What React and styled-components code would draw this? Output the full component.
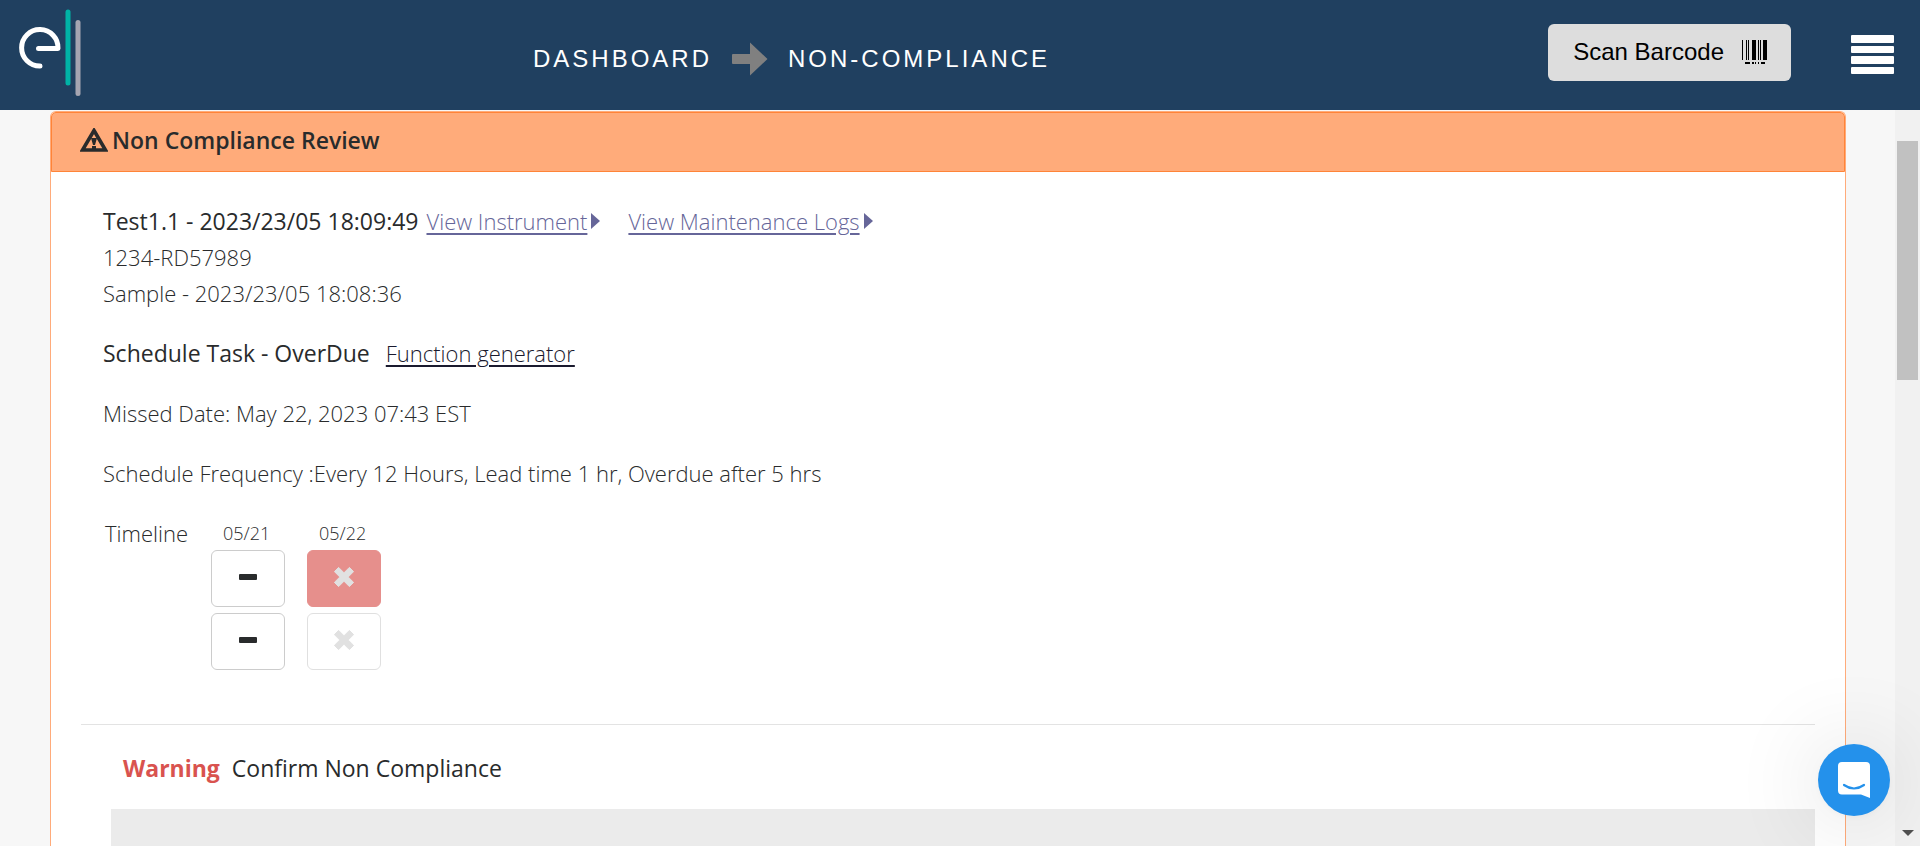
import React from "react";
import styled, { createGlobalStyle, css } from "styled-components";

const GlobalStyle = createGlobalStyle`
  *, *::before, *::after { box-sizing: border-box; }
  body {
    margin: 0;
    background: #f7f7f7;
    color: #292b2c;
    font-family: "Segoe UI", "Open Sans", "Noto Sans", sans-serif;
    font-size: 22px;
    font-weight: 300;
    line-height: 36px;
  }
  button { font: inherit; color: inherit; cursor: pointer; }
  p, h1, h2 { margin: 0; padding: 0; font: inherit; }
`;

const Shell = styled.div`
  display: flex;
  flex-direction: column;
  height: 100vh;
  overflow: hidden;
`;

const TopBar = styled.header`
  display: grid;
  grid-template-columns: 533px 1fr auto;
  align-items: center;
  flex: none;
  height: 110px;
  padding-right: 26px;
  background: #204060;
  color: #fff;
  font-family: "Liberation Sans", Arial, sans-serif;
  font-size: 24px;
`;

const Logo = styled.a`
  display: block;
  height: 110px;
  svg { display: block; }
`;

const Trail = styled.nav`
  display: flex;
  align-items: center;
  gap: 20px;
  padding-top: 8px;
  letter-spacing: 3px;
  text-transform: uppercase;
`;

const TrailLink = styled.a`
  color: #fff;
  text-decoration: none;
`;

const Actions = styled.div`
  display: flex;
  align-items: center;
  gap: 60px;
`;

const ScanButton = styled.button`
  display: flex;
  align-items: center;
  gap: 18px;
  height: 57px;
  margin-bottom: 6px;
  padding: 0 24px 0 25px;
  border: 0;
  border-radius: 6px;
  background: #ddd;
  color: #000;
`;

const MenuButton = styled.button`
  padding: 0;
  border: 0;
  background: none;
  svg { display: block; }
`;

const Viewport = styled.div`
  display: flex;
  flex: 1;
  min-height: 0;
`;

const Main = styled.main`
  display: flex;
  flex: 1;
  min-width: 0;
  padding: 1px 49px 0 50px;
`;

const Card = styled.section`
  display: flex;
  flex-direction: column;
  flex: 1;
  border: 1px solid #ffab7a;
  border-bottom: 0;
  border-radius: 6px 6px 0 0;
  background: #fff;
`;

const CardHeader = styled.h1`
  display: flex;
  align-items: center;
  gap: 4px;
  height: 60px;
  padding: 0 28px 4px;
  border: 1px solid #ff8438;
  border-radius: 5px 5px 0 0;
  background: #ffab7a;
  font-size: 23px;
  font-weight: 600;
`;

const Details = styled.div`
  display: flex;
  flex-direction: column;
  gap: 24px;
  margin: 0 30px;
  padding: 31px 22px 54px;
  border-bottom: 1px solid #e3e3e3;
`;

const Strong = styled.span`
  font-size: 23px;
  font-weight: 400;
`;

const Line = styled.p`
  display: flex;
  align-items: center;
  gap: ${(p) => p.$gap || 0}px;
`;

const TextLink = styled.a`
  color: ${(p) => (p.$dark ? "#1a1a2e" : "#666699")};
  text-decoration: underline;
  text-decoration-thickness: 2px;
  text-underline-offset: 3px;
`;

const ArrowLink = styled.span`
  display: flex;
  align-items: center;
  gap: 4px;
  &::after {
    content: "";
    border-left: 9px solid #666699;
    border-top: 8px solid transparent;
    border-bottom: 8px solid transparent;
  }
`;

const Timeline = styled.div`
  display: flex;
  gap: 22px;
  padding-left: 2px;
`;

const TimelineLabel = styled.span`
  width: 84px;
`;

const Day = styled.div`
  display: flex;
  flex-direction: column;
  gap: 6px;
  width: 74px;
`;

const DayName = styled.span`
  height: 29px;
  padding-left: 12px;
  font-size: 18px;
`;

const Slot = styled.button`
  display: flex;
  align-items: center;
  justify-content: center;
  height: 57px;
  padding: 0 0 4px;
  border: 1px solid #ccc;
  border-radius: 6px;
  background: #fff;
  ${(p) => p.$faded && css`border-color: #e0e0e0;`}
  ${(p) => p.$missed && css`
    border-color: #e68f8c;
    background: #e68f8c;
  `}
`;

const Confirm = styled.section`
  display: flex;
  flex-direction: column;
  flex: 1;
  gap: 23px;
  margin: 0 30px;
  padding: 25px 0 0 30px;
`;

const Notice = styled.h2`
  display: flex;
  gap: 12px;
  padding-left: 12px;
  font-size: 23px;
  font-weight: 400;
`;

const Danger = styled.strong`
  color: #d9534f;
  font-weight: 700;
`;

const Panel = styled.div`
  flex: 1;
  background: #ebebeb;
`;

const ScrollTrack = styled.div`
  display: flex;
  flex-direction: column;
  align-items: center;
  justify-content: space-between;
  width: 25px;
  padding: 31px 0 10px;
  background: #f1f1f1;
  &::before {
    content: "";
    width: 21px;
    height: 239px;
    background: #c1c1c1;
  }
  &::after {
    content: "";
    border-top: 6px solid #505050;
    border-left: 6px solid transparent;
    border-right: 6px solid transparent;
  }
`;

const ChatButton = styled.button`
  position: fixed;
  right: 30px;
  bottom: 30px;
  width: 72px;
  height: 72px;
  padding: 0;
  border: 0;
  border-radius: 50%;
  background: #2491eb;
  box-shadow: 0 2px 9px rgba(0, 0, 0, 0.04), 0 3px 90px rgba(0, 0, 0, 0.16);
  svg { display: block; }
`;

const DashIcon = () => (
  <svg width="20" height="20" viewBox="0 0 20 20" aria-hidden="true">
    <rect x="1" y="7" width="18" height="6" rx="1" fill="#292b2c" />
  </svg>
);

const CrossIcon = () => (
  <svg width="20" height="20" viewBox="0 0 20 20" aria-hidden="true">
    <path
      d="M4.6 0.4 10 5.8 15.4 0.4 19.6 4.6 14.2 10 19.6 15.4 15.4 19.6 10 14.2 4.6 19.6 0.4 15.4 5.8 10 0.4 4.6Z"
      fill="#e1e1e1"
      stroke="#e1e1e1"
      strokeLinejoin="round"
    />
  </svg>
);

const BARS = [[0, 1], [4, 1], [6, 1], [10, 4], [16, 1], [18, 1], [21, 4]];

const BarcodeIcon = () => (
  <svg width="25" height="24" viewBox="0 0 25 24" aria-hidden="true">
    {BARS.map(([x, w]) => (
      <rect key={x} x={x} y="0" width={w} height="20" />
    ))}
    <path d="M3 22h5v2H3zM10 22h2v2h-2zM13 22h1v2h-1zM16 22h1v2h-1zM19 22h4v2h-4z" />
  </svg>
);

const days = [
  { name: "05/21", slots: [{ label: "Not due" }, { label: "Not due" }] },
  {
    name: "05/22",
    slots: [
      { label: "Missed", cross: true, missed: true },
      { label: "Missed", cross: true, faded: true },
    ],
  },
];

export default function App() {
  return (
    <Shell>
      <GlobalStyle />
      <TopBar>
        <Logo href="#" aria-label="Home">
          <svg width="100" height="110" viewBox="0 0 100 110" fill="none" strokeLinecap="round">
            <path d="M38.5 48.5H58A18.2 18.2 0 1 0 40 66" stroke="#fff" strokeWidth="5" strokeLinejoin="round" />
            <path d="M68 12V83" stroke="#00b3a6" strokeWidth="5" />
            <path d="M78 22.5V93.5" stroke="#a5a5b1" strokeWidth="5" />
          </svg>
        </Logo>
        <Trail aria-label="Breadcrumb">
          <TrailLink href="#">Dashboard</TrailLink>
          <svg width="36" height="34" viewBox="0 0 36 34" aria-hidden="true">
            <path d="M1 12H18V0.5L35.5 17 18 33.5V22H1Q0 22 0 21V13Q0 12 1 12Z" fill="#808080" />
          </svg>
          <span>Non-Compliance</span>
        </Trail>
        <Actions>
          <ScanButton type="button">
            Scan Barcode
            <BarcodeIcon />
          </ScanButton>
          <MenuButton type="button" aria-label="Menu">
            <svg width="43" height="40" viewBox="0 0 43 40" fill="#fff" aria-hidden="true">
              <rect y="0" width="43" height="8" rx="1" />
              <rect y="11" width="43" height="7" rx="1" />
              <rect y="21" width="43" height="8" rx="1" />
              <rect y="32" width="43" height="7" rx="1" />
            </svg>
          </MenuButton>
        </Actions>
      </TopBar>

      <Viewport>
        <Main>
          <Card>
            <CardHeader>
              <svg width="28" height="24" viewBox="0 0 28 24" aria-hidden="true">
                <path d="M14 2.5 25.5 22H2.5Z" fill="none" stroke="#292b2c" strokeWidth="3.6" />
                <path d="M11 10h6l-2 7h-2zM12 18h4v3h-4z" fill="#292b2c" />
              </svg>
              Non Compliance Review
            </CardHeader>
            <Details>
              <div>
                <Line $gap={28}>
                  <Line as="span" $gap={8}>
                    <Strong>Test1.1 - 2023/23/05 18:09:49</Strong>
                    <ArrowLink><TextLink href="#">View Instrument</TextLink></ArrowLink>
                  </Line>
                  <ArrowLink><TextLink href="#">View Maintenance Logs</TextLink></ArrowLink>
                </Line>
                <p>1234-RD57989</p>
                <p>Sample - 2023/23/05 18:08:36</p>
              </div>
              <Line $gap={16}>
                <Strong>Schedule Task - OverDue</Strong>
                <TextLink href="#" $dark>Function generator</TextLink>
              </Line>
              <p>Missed Date: May 22, 2023 07:43 EST</p>
              <p>Schedule Frequency :Every 12 Hours, Lead time 1 hr, Overdue after 5 hrs</p>
              <Timeline>
                <TimelineLabel>Timeline</TimelineLabel>
                {days.map((day) => (
                  <Day key={day.name}>
                    <DayName>{day.name}</DayName>
                    {day.slots.map((slot, i) => (
                      <Slot key={i} type="button" aria-label={slot.label} $missed={slot.missed} $faded={slot.faded}>
                        {slot.cross ? <CrossIcon /> : <DashIcon />}
                      </Slot>
                    ))}
                  </Day>
                ))}
              </Timeline>
            </Details>
            <Confirm>
              <Notice>
                <Danger>Warning</Danger>
                Confirm Non Compliance
              </Notice>
              <Panel />
            </Confirm>
          </Card>
        </Main>
        <ScrollTrack />
      </Viewport>

      <ChatButton type="button" aria-label="Open chat">
        <svg width="72" height="72" viewBox="0 0 72 72" fill="none" aria-hidden="true">
          <path d="M24 18H48Q52 18 52 22V54L43 50.5H24Q20 50.5 20 46.5V22Q20 18 24 18Z" fill="#fff" />
          <path d="M26 41Q36 48 46 41" stroke="#2491eb" strokeWidth="2.2" strokeLinecap="round" />
        </svg>
      </ChatButton>
    </Shell>
  );
}
